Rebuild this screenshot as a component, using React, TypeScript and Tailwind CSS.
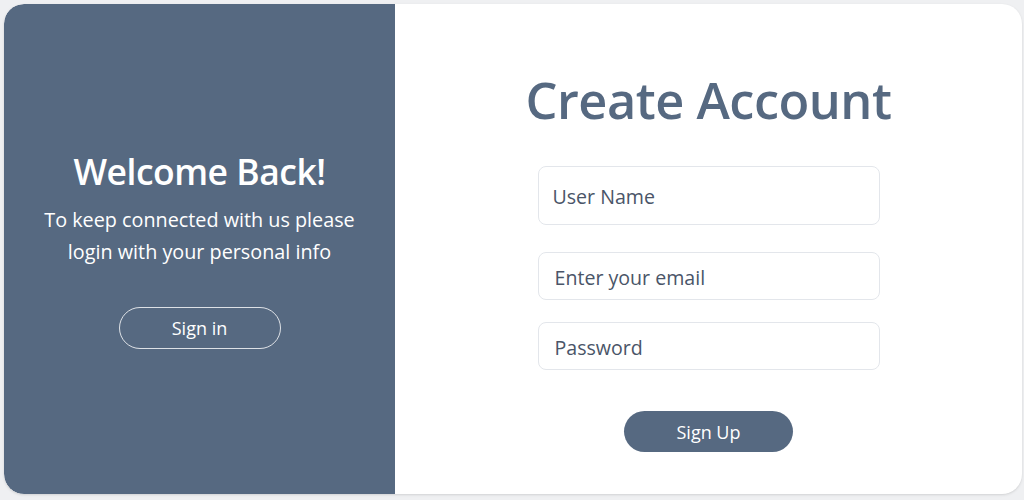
import React from 'react';

export default function App() {
  return (
    <div
      className="w-[1024px] h-[500px] bg-[#eff0f2] pt-[4px] pl-[4px] pr-[2px] pb-[6px]"
      style={{ fontFamily: '"Open Sans", "Noto Sans", sans-serif' }}
    >
      <div className="flex h-full rounded-[20px] bg-white shadow-sm overflow-hidden">
        <div className="w-[391px] bg-[#566981] rounded-l-[20px] flex flex-col items-center justify-center text-white">
          <h1 className="text-[35.5px] font-semibold leading-[44px] tracking-[-0.5px]">Welcome Back!</h1>
          <p className="mt-[11px] text-[19.8px] leading-[32px] text-center">
            To keep connected with us please
            <br />
            login with your personal info
          </p>
          <button className="mt-[39px] w-[162px] h-[42px] rounded-full border border-white/80 text-[18px]">
            Sign in
          </button>
        </div>

        <div className="flex-1 flex flex-col items-center pt-[64px]">
          <h2 className="text-[50.5px] leading-[64px] font-semibold text-[#566981] tracking-[-0.5px]">
            Create Account
          </h2>
          <form className="mt-[34px] w-[342px] flex flex-col" onSubmit={(e) => e.preventDefault()}>
            <input
              placeholder="User Name"
              className="h-[59px] rounded-[8px] border border-[#e3e6eb] px-[14px] pt-[2px] text-[19.6px] placeholder:text-[#4a5568] outline-none"
            />
            <input
              placeholder="Enter your email"
              className="mt-[27px] h-[48px] rounded-[8px] border border-[#e3e6eb] px-[16px] pt-[2px] text-[19.6px] placeholder:text-[#4a5568] outline-none"
            />
            <input
              placeholder="Password"
              type="password"
              className="mt-[22px] h-[48px] rounded-[8px] border border-[#e3e6eb] px-[16px] pt-[2px] text-[19.6px] placeholder:text-[#4a5568] outline-none"
            />
            <button className="mt-[41px] self-center w-[169px] h-[41px] rounded-full bg-[#566981] text-white text-[18px] pt-[2px]">
              Sign Up
            </button>
          </form>
        </div>
      </div>
    </div>
  );
}
